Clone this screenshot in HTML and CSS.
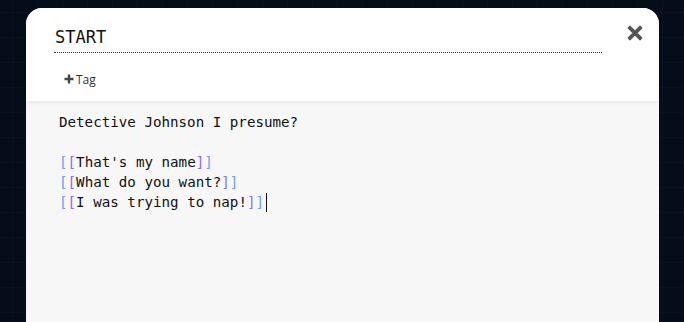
FILE: index.html
```html
<!DOCTYPE html>
<html lang="en">
<head>
    <meta charset="UTF-8">
    <meta name="viewport" content="width=device-width, initial-scale=1.0">
    <title>Passage editor</title>
    <link rel="stylesheet" href="styles.css">
</head>
<body>
    <div class="dialog">
        <div class="dialog-header">
            <div class="title-row">
                <div class="passage-name">START</div>
                <div class="close-btn" title="Close">
                    <svg width="16" height="16" viewBox="0 0 16 16">
                        <path d="M3 1.2 L8 6.2 L13 1.2 L14.8 3 L9.8 8 L14.8 13 L13 14.8 L8 9.8 L3 14.8 L1.2 13 L6.2 8 L1.2 3 Z" fill="#555" stroke="#555" stroke-width="1.2" stroke-linejoin="round"/>
                    </svg>
                </div>
            </div>
            <div class="tag-row">
                <span class="add-tag">
                    <svg width="10" height="10" viewBox="0 0 10 10">
                        <path d="M3.8 0.5h2.4v3.3h3.3v2.4H6.2v3.3H3.8V6.2H0.5V3.8h3.3z" fill="#444"/>
                    </svg>
                    Tag
                </span>
            </div>
        </div>
        <div class="passage-text">
            <div class="line">Detective Johnson I presume?</div>
            <div class="line">&nbsp;</div>
            <div class="line"><span class="b1">[</span><span class="b2">[</span>That's my name<span class="b2">]</span><span class="b1">]</span></div>
            <div class="line"><span class="b1">[</span><span class="b2">[</span>What do you want?<span class="b2">]</span><span class="b1">]</span></div>
            <div class="line"><span class="b1">[</span><span class="b2">[</span>I was trying to nap!<span class="b2">]</span><span class="b1">]</span><span class="cursor"></span></div>
        </div>
    </div>
</body>
</html>
```

FILE: styles.css
```css
* {
    margin: 0;
    padding: 0;
    box-sizing: border-box;
}

body {
    height: 100vh;
    overflow: hidden;
    background-color: #050c1a;
    background-image:
        linear-gradient(to right, rgba(255, 255, 255, 0.025) 1px, transparent 1px),
        linear-gradient(to bottom, rgba(255, 255, 255, 0.025) 1px, transparent 1px);
    background-size: 25px 25px;
    background-position: 12px 12px;
    padding: 8px 25px 0 26px;
}

.dialog {
    width: 633px;
    height: 330px;
    display: flex;
    flex-direction: column;
    background-color: #f7f7f7;
    border-radius: 16px 16px 0 0;
    overflow: hidden;
}

.dialog-header {
    height: 93px;
    background-color: #fff;
    padding: 18px 16px 0 28px;
    box-shadow: 0 1px 5px rgba(0, 0, 0, 0.08);
    position: relative;
    z-index: 1;
}

.title-row {
    display: flex;
    align-items: flex-start;
    gap: 25px;
}

.passage-name {
    width: 548px;
    height: 27px;
    padding: 0 0 0 1px;
    font-family: "DejaVu Sans Mono", monospace;
    font-size: 17px;
    line-height: 22px;
    color: #111;
    border-bottom: 1px dotted #333;
}

.close-btn {
    margin-top: -1px;
    width: 16px;
    height: 16px;
    cursor: pointer;
}

.tag-row {
    padding: 17px 0 0 10px;
}

.add-tag {
    display: inline-flex;
    align-items: center;
    gap: 2px;
    font-family: "Open Sans", sans-serif;
    font-size: 12px;
    color: #333;
    cursor: pointer;
}

.passage-text {
    flex: 1;
    padding: 11px 0 0 33px;
    font-family: "DejaVu Sans Mono", monospace;
    font-size: 14.2px;
    line-height: 20px;
    color: #111;
}

.b1 {
    color: #6f9ef0;
}

.b2 {
    color: #8c6ee6;
}

.cursor {
    display: inline-block;
    width: 1px;
    height: 19px;
    margin-left: 2px;
    vertical-align: -5px;
    background-color: #111;
}
```
